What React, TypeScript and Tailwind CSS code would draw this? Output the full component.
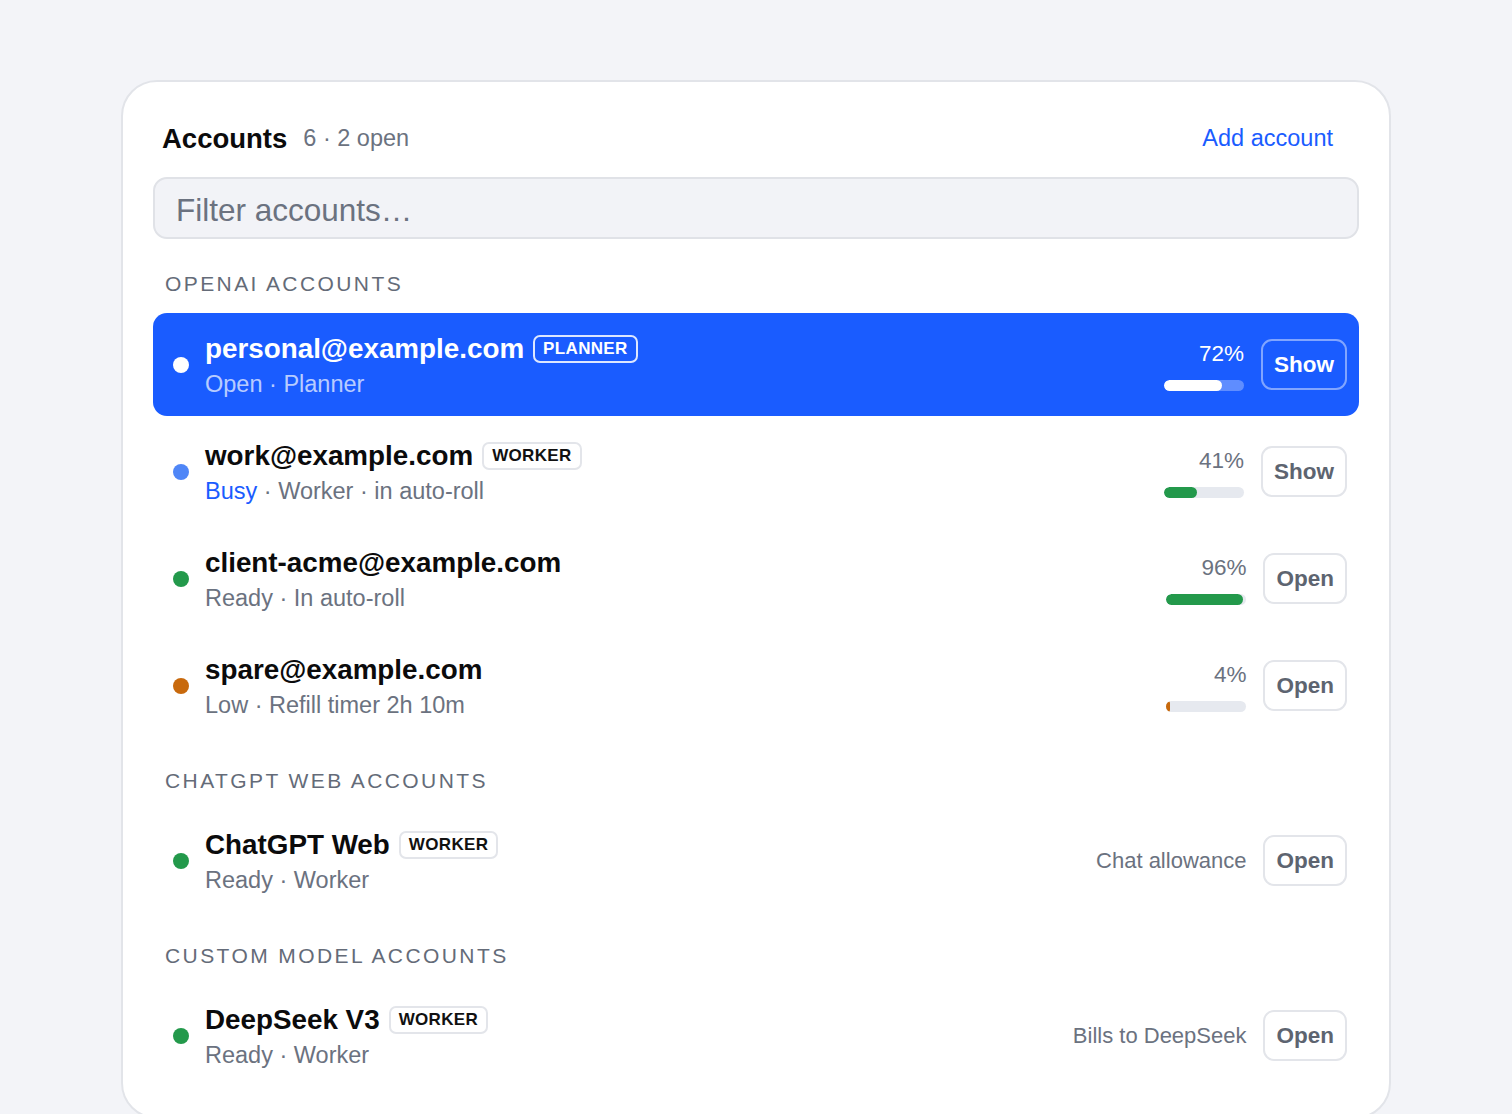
type Row = {
  name: string
  role?: string
  dot: string
  status: { text: string; color?: string }
  rest: string
  percent?: number
  barColor?: string
  note?: string
  action: string
  selected?: boolean
}

const openai: Row[] = [
  {
    name: "personal@example.com",
    role: "PLANNER",
    dot: "bg-white",
    status: { text: "Open" },
    rest: "Planner",
    percent: 72,
    barColor: "bg-white",
    action: "Show",
    selected: true,
  },
  {
    name: "work@example.com",
    role: "WORKER",
    dot: "bg-[#4f86f7]",
    status: { text: "Busy", color: "text-[#1a5cff]" },
    rest: "Worker · in auto-roll",
    percent: 41,
    barColor: "bg-[#23994b]",
    action: "Show",
  },
  {
    name: "client-acme@example.com",
    dot: "bg-[#23994b]",
    status: { text: "Ready" },
    rest: "In auto-roll",
    percent: 96,
    barColor: "bg-[#23994b]",
    action: "Open",
  },
  {
    name: "spare@example.com",
    dot: "bg-[#c8690c]",
    status: { text: "Low" },
    rest: "Refill timer 2h 10m",
    percent: 4,
    barColor: "bg-[#c8690c]",
    action: "Open",
  },
]

const chatgpt: Row[] = [
  {
    name: "ChatGPT Web",
    role: "WORKER",
    dot: "bg-[#23994b]",
    status: { text: "Ready" },
    rest: "Worker",
    note: "Chat allowance",
    action: "Open",
  },
]

const custom: Row[] = [
  {
    name: "DeepSeek V3",
    role: "WORKER",
    dot: "bg-[#23994b]",
    status: { text: "Ready" },
    rest: "Worker",
    note: "Bills to DeepSeek",
    action: "Open",
  },
]

function AccountRow({ row }: { row: Row }) {
  const sel = row.selected
  return (
    <div
      className={`flex h-[103px] items-center rounded-[14px] pl-[20px] pr-[12px] ${
        sel ? "bg-[#1a5cff]" : ""
      }`}
    >
      <span className={`h-[16px] w-[16px] shrink-0 rounded-full ${row.dot}`} />
      <div className="ml-[16px] flex min-w-0 flex-1 flex-col">
        <div className="flex items-center gap-[9px]">
          <span
            className={`text-[27.8px] font-bold leading-[34px] ${
              sel ? "text-white" : "text-[#0b0b0c]"
            }`}
          >
            {row.name}
          </span>
          {row.role && (
            <span
              className={`rounded-[7px] border-2 px-[8px] text-[17px] font-bold leading-[24px] tracking-[0.02em] ${
                sel ? "border-white/85 text-white" : "border-[#e3e5ea] text-[#111]"
              }`}
            >
              {row.role}
            </span>
          )}
        </div>
        <div
          className={`mt-[5px] text-[23.5px] leading-[26px] ${
            sel ? "text-white/70" : "text-[#6b7280]"
          }`}
        >
          <span className={row.status.color}>{row.status.text}</span>
          {" · "}
          {row.rest}
        </div>
      </div>
      {row.percent !== undefined ? (
        <div className="flex flex-col items-end gap-[13px] pt-[2px]">
          <span
            className={`text-[22.5px] leading-[26px] ${
              sel ? "text-white" : "text-[#6b7280]"
            }`}
          >
            {row.percent}%
          </span>
          <div
            className={`h-[11px] w-[80px] overflow-hidden rounded-full ${
              sel ? "bg-white/30" : "bg-[#e6e9ef]"
            }`}
          >
            <div
              className={`h-full rounded-full ${row.barColor}`}
              style={{ width: `${row.percent}%` }}
            />
          </div>
        </div>
      ) : (
        <span className="text-[22px] text-[#6b7280]">{row.note}</span>
      )}
      <button
        className={`ml-[17px] h-[51px] rounded-[11px] border-2 px-[11px] text-[22.5px] font-bold ${
          sel
            ? "border-white/45 text-white"
            : "border-[#e3e5ea] bg-white text-[#5d6470]"
        }`}
      >
        {row.action}
      </button>
    </div>
  )
}

function Section({ title, rows, first }: { title: string; rows: Row[]; first?: boolean }) {
  return (
    <div className={first ? "mt-[33px]" : "mt-[32px]"}>
      <div className="pl-[12px] text-[21px] uppercase leading-[24px] tracking-[0.115em] text-[#646b78]">
        {title}
      </div>
      <div className={`${first ? "mt-[17px]" : "mt-[16px]"} flex flex-col gap-[4px]`}>
        {rows.map((r) => (
          <AccountRow key={r.name} row={r} />
        ))}
      </div>
    </div>
  )
}

export default function App() {
  return (
    <div
      className="min-h-screen bg-[#f3f4f8] pt-[80px]"
      style={{ fontFamily: '"Liberation Sans", Arial, sans-serif' }}
    >
      <div className="mx-auto w-[1270px] rounded-[36px] border-2 border-[#e2e4e9] bg-white px-[30px] pb-[30px] pt-[32px]">
        {/* Header */}
        <div className="flex h-[50px] items-center pl-[9px] pr-[26px]">
          <h1 className="text-[27.5px] font-bold text-[#0b0b0c]">Accounts</h1>
          <span className="ml-[16px] text-[23.5px] text-[#6b7280]">6 · 2 open</span>
          <button className="ml-auto text-[23.5px] text-[#1a5cff]">Add account</button>
        </div>

        {/* Filter */}
        <input
          placeholder="Filter accounts…"
          className="mt-[13px] h-[62px] w-full rounded-[14px] border-2 border-[#e0e2e7] bg-[#f2f3f7] px-[21px] pt-[4px] text-[31.5px] text-[#111] outline-none placeholder:text-[#6b7280]"
        />

        <Section title="OpenAI accounts" rows={openai} first />
        <Section title="ChatGPT web accounts" rows={chatgpt} />
        <Section title="Custom model accounts" rows={custom} />
      </div>
    </div>
  )
}
